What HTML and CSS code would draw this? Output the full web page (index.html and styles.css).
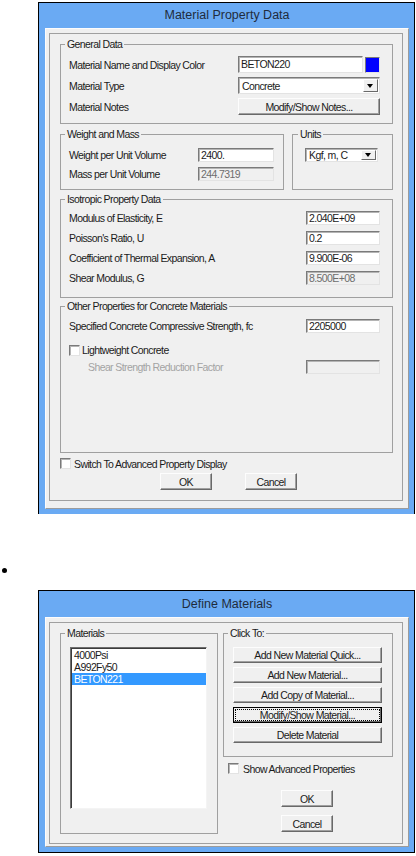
FILE: index.html
```html
<!DOCTYPE html>
<html lang="en">
<head>
    <meta charset="UTF-8">
    <meta name="viewport" content="width=device-width, initial-scale=1.0">
    <title>Materials</title>
    <link rel="stylesheet" href="styles.css">
</head>
<body>
    <div class="page">
        <div class="win">
            <div class="win-title">Material Property Data</div>
            <div class="win-body">
                <div class="frame">
                    <div class="grp">
                        <div class="grp-title">General Data</div>
                        <div class="rows general">
                            <div class="row">
                                <span class="lbl general-lbl">Material Name and Display Color</span>
                                <span class="field name-field">BETON220</span>
                                <span class="swatch"></span>
                            </div>
                            <div class="row">
                                <span class="lbl general-lbl">Material Type</span>
                                <span class="select type-select"><span class="select-val">Concrete</span><span class="select-btn"></span></span>
                            </div>
                            <div class="row">
                                <span class="lbl general-lbl">Material Notes</span>
                                <span class="btn notes-btn">Modify/Show Notes...</span>
                            </div>
                        </div>
                    </div>

                    <div class="grp-pair">
                        <div class="grp weight">
                            <div class="grp-title">Weight and Mass</div>
                            <div class="rows weight-rows">
                                <div class="row">
                                    <span class="lbl weight-lbl">Weight per Unit Volume</span>
                                    <span class="field weight-field">2400.</span>
                                </div>
                                <div class="row">
                                    <span class="lbl weight-lbl">Mass per Unit Volume</span>
                                    <span class="field weight-field disabled">244.7319</span>
                                </div>
                            </div>
                        </div>
                        <div class="grp units">
                            <div class="grp-title units-title">Units</div>
                            <div class="rows weight-rows">
                                <div class="row">
                                    <span class="select units-select"><span class="select-val">Kgf, m, C</span><span class="select-btn"></span></span>
                                </div>
                            </div>
                        </div>
                    </div>

                    <div class="grp iso">
                        <div class="grp-title">Isotropic Property Data</div>
                        <div class="rows iso-rows">
                            <div class="row">
                                <span class="lbl iso-lbl">Modulus of Elasticity,  E</span>
                                <span class="field iso-field">2.040E+09</span>
                            </div>
                            <div class="row">
                                <span class="lbl iso-lbl">Poisson's Ratio,  U</span>
                                <span class="field iso-field">0.2</span>
                            </div>
                            <div class="row">
                                <span class="lbl iso-lbl">Coefficient of Thermal Expansion,  A</span>
                                <span class="field iso-field">9.900E-06</span>
                            </div>
                            <div class="row">
                                <span class="lbl iso-lbl">Shear Modulus,  G</span>
                                <span class="field iso-field disabled">8.500E+08</span>
                            </div>
                        </div>
                    </div>

                    <div class="grp other">
                        <div class="grp-title">Other Properties for Concrete Materials</div>
                        <div class="rows other-rows">
                            <div class="row">
                                <span class="lbl iso-lbl">Specified Concrete Compressive Strength, fc</span>
                                <span class="field iso-field">2205000</span>
                            </div>
                            <div class="row check-row">
                                <span class="chk"></span>
                                <span class="lbl">Lightweight Concrete</span>
                            </div>
                            <div class="row">
                                <span class="lbl iso-lbl muted indent">Shear Strength Reduction Factor</span>
                                <span class="field iso-field disabled"></span>
                            </div>
                        </div>
                    </div>

                    <div class="row switch-row">
                        <span class="chk"></span>
                        <span class="lbl">Switch To Advanced Property Display</span>
                    </div>
                    <div class="row btn-row">
                        <span class="btn ok-btn">OK</span>
                        <span class="btn cancel-btn">Cancel</span>
                    </div>
                </div>
            </div>
        </div>

        <div class="bullet-row"><span class="bullet"></span></div>

        <div class="win win-define">
            <div class="win-title">Define Materials</div>
            <div class="win-body">
                <div class="frame define-frame">
                    <div class="grp materials">
                        <div class="grp-title mat-title">Materials</div>
                        <div class="list">
                            <div class="list-item">4000Psi</div>
                            <div class="list-item">A992Fy50</div>
                            <div class="list-item selected">BETON221</div>
                        </div>
                    </div>
                    <div class="side">
                        <div class="grp click">
                            <div class="grp-title mat-title">Click To:</div>
                            <div class="click-btns">
                                <span class="btn wide-btn">Add New Material Quick...</span>
                                <span class="btn wide-btn">Add New Material...</span>
                                <span class="btn wide-btn">Add Copy of Material...</span>
                                <span class="btn wide-btn focused"><span class="focus-ring">Modify/Show Material...</span></span>
                                <span class="btn wide-btn">Delete Material</span>
                            </div>
                        </div>
                        <div class="row adv-row">
                            <span class="chk"></span>
                            <span class="lbl">Show Advanced Properties</span>
                        </div>
                        <span class="btn side-btn ok2">OK</span>
                        <span class="btn side-btn cancel2">Cancel</span>
                    </div>
                </div>
            </div>
        </div>
    </div>
</body>
</html>
```

FILE: styles.css
```css
*{
    box-sizing: border-box;
}
body{
    margin: 0;
    background: #fff;
    font-family: "Liberation Sans", Arial, sans-serif;
    font-size: 10.5px;
    letter-spacing: -0.6px;
    color: #1b1b1b;
}
.page{
    padding-top: 2px;
}

/* window chrome */
.win{
    width: 377px;
    margin-left: 38px;
    background: #6aaaf3;
    border: 1px solid #000;
    border-bottom: none;
    padding: 0 5px 5px 6px;
}
.win-title{
    height: 25px;
    line-height: 25px;
    text-align: center;
    font-size: 12.5px;
    letter-spacing: 0;
    color: #1f2c3c;
}
.win-body{
    background: #f0f0f0;
    border: 1px solid;
    border-color: #fcfcfc #9c9c9c #9c9c9c #fcfcfc;
    padding: 4px 5px 7px 3px;
}
.frame{
    border: 1px solid #a0a0a0;
    padding: 10px 9px 10px 10px;
}

/* group boxes */
.grp{
    border: 1px solid #a0a0a0;
    padding: 0 8px 8px 8px;
}
.grp-title{
    width: fit-content;
    height: 13px;
    line-height: 13px;
    margin: -7px 0 0 -4px;
    padding: 0 2px;
    background: #f0f0f0;
    white-space: nowrap;
}
.rows{
    display: flex;
    flex-direction: column;
}
.row{
    display: flex;
    align-items: center;
}
.lbl{
    flex: none;
    white-space: nowrap;
}
.muted{
    color: #a3a3a3;
}

/* controls */
.field{
    display: block;
    height: 14px;
    line-height: 12px;
    padding-left: 2px;
    background: #fff;
    border: 1px solid;
    border-color: #7a7a7a #e3e3e3 #e3e3e3 #7a7a7a;
    box-shadow: inset 1px 1px 0 #b4b4b4;
    white-space: nowrap;
    overflow: hidden;
}
.field.disabled{
    background: #f0f0f0;
    color: #6d6d6d;
}
.swatch{
    width: 15px;
    height: 16px;
    margin-left: 2px;
    background: #0000ff;
    border: 1px solid;
    border-color: #7a7a7a #e3e3e3 #e3e3e3 #7a7a7a;
}
.select{
    display: flex;
    align-items: center;
    height: 14px;
    padding: 1px;
    background: #fff;
    border: 1px solid;
    border-color: #7a7a7a #e3e3e3 #e3e3e3 #7a7a7a;
    box-shadow: inset 1px 1px 0 #b4b4b4;
}
.select-val{
    flex: 1;
    padding-left: 2px;
    line-height: 12px;
}
.select-btn{
    position: relative;
    width: 15px;
    height: 100%;
    background: #f0f0f0;
    border: 1px solid;
    border-color: #fff #696969 #696969 #fff;
}
.select-btn::after{
    content: "";
    position: absolute;
    left: 3px;
    top: 50%;
    margin-top: -2px;
    border-left: 3.5px solid transparent;
    border-right: 3.5px solid transparent;
    border-top: 4px solid #000;
}
.btn{
    display: flex;
    align-items: center;
    justify-content: center;
    height: 17px;
    background: #f0f0f0;
    border: 1px solid;
    border-color: #fdfdfd #696969 #696969 #fdfdfd;
    box-shadow: inset -1px -1px 0 #a0a0a0;
    white-space: nowrap;
}
.chk{
    flex: none;
    width: 11px;
    height: 11px;
    background: #fff;
    border: 1px solid;
    border-color: #7a7a7a #e3e3e3 #e3e3e3 #7a7a7a;
    box-shadow: inset 1px 1px 0 #b4b4b4;
}

/* material property data */
.general{
    padding-top: 5px;
    gap: 4px;
}
.general .row{
    height: 17px;
}
.general-lbl{
    width: 169px;
}
.name-field{
    width: 125px;
    height: 17px;
    line-height: 15px;
}
.type-select{
    width: 142px;
    height: 17px;
}
.notes-btn{
    width: 142px;
}
.grp-pair{
    display: flex;
    gap: 8px;
    margin-top: 10px;
}
.weight{
    width: 224px;
}
.units{
    width: 101px;
    padding-left: 12px;
}
.units-title{
    margin-left: -7px;
}
.weight-rows{
    padding-top: 7px;
    gap: 5px;
}
.weight-rows .row{
    height: 14px;
}
.weight-lbl{
    width: 129px;
}
.weight-field{
    width: 76px;
}
.units-select{
    width: 73px;
}
.iso{
    margin-top: 9px;
    padding-bottom: 12px;
}
.iso-rows{
    padding-top: 5px;
    gap: 6px;
}
.iso-rows .row,
.other-rows .row{
    height: 14px;
}
.iso-lbl{
    width: 237px;
}
.iso-field{
    width: 74px;
}
.other{
    height: 147px;
    margin-top: 8px;
}
.other-rows{
    padding-top: 6px;
}
.check-row{
    gap: 2px;
    margin: 10px 0 3px;
}
.indent{
    padding-left: 19px;
}
.switch-row{
    height: 11px;
    gap: 3px;
    margin-top: 5px;
}
.btn-row{
    margin-top: 4px;
    padding-left: 100px;
    gap: 33px;
}
.ok-btn,
.cancel-btn{
    width: 52px;
}

/* separator bullet */
.bullet-row{
    height: 5px;
    margin-top: 54px;
    padding-left: 2px;
}
.bullet{
    display: block;
    width: 5px;
    height: 5px;
    border-radius: 50%;
    background: #000;
}

/* define materials */
.win-define{
    margin-top: 17px;
    border-bottom: 1px solid #000;
}
.win-define .win-title{
    height: 26px;
    line-height: 26px;
}
.win-define .win-body{
    padding-bottom: 2px;
}
.define-frame{
    display: flex;
    align-items: flex-start;
    gap: 5px;
    padding-bottom: 9px;
}
.materials{
    width: 158px;
    height: 201px;
    padding-left: 9px;
}
.mat-title{
    margin-left: -5px;
}
.list{
    width: 137px;
    height: 162px;
    margin-top: 7px;
    padding-top: 1px;
    background: #fff;
    border: 1px solid;
    border-color: #6d6d6d #f4f4f4 #f4f4f4 #6d6d6d;
    box-shadow: inset 1px 1px 0 #3c3c3c;
}
.list-item{
    height: 12px;
    line-height: 12px;
    padding-left: 2px;
    margin-left: 1px;
}
.list-item.selected{
    background: #3399ff;
    color: #fff;
}
.side{
    display: flex;
    flex-direction: column;
    width: 170px;
}
.click{
    padding: 0 0 13px 9px;
}
.click-btns{
    display: flex;
    flex-direction: column;
    gap: 4px;
    padding-top: 7px;
}
.wide-btn{
    width: 149px;
    height: 16px;
}
.focused{
    border-color: #000;
    box-shadow: inset -1px -1px 0 #696969;
    padding: 1px;
}
.focus-ring{
    display: flex;
    align-items: center;
    justify-content: center;
    width: 100%;
    height: 100%;
    border: 1px dotted #000;
}
.adv-row{
    height: 11px;
    gap: 4px;
    margin: 6px 0 0 5px;
}
.side-btn{
    width: 52px;
    margin-left: 58px;
}
.ok2{
    margin-top: 16px;
}
.cancel2{
    margin-top: 8px;
}
```
